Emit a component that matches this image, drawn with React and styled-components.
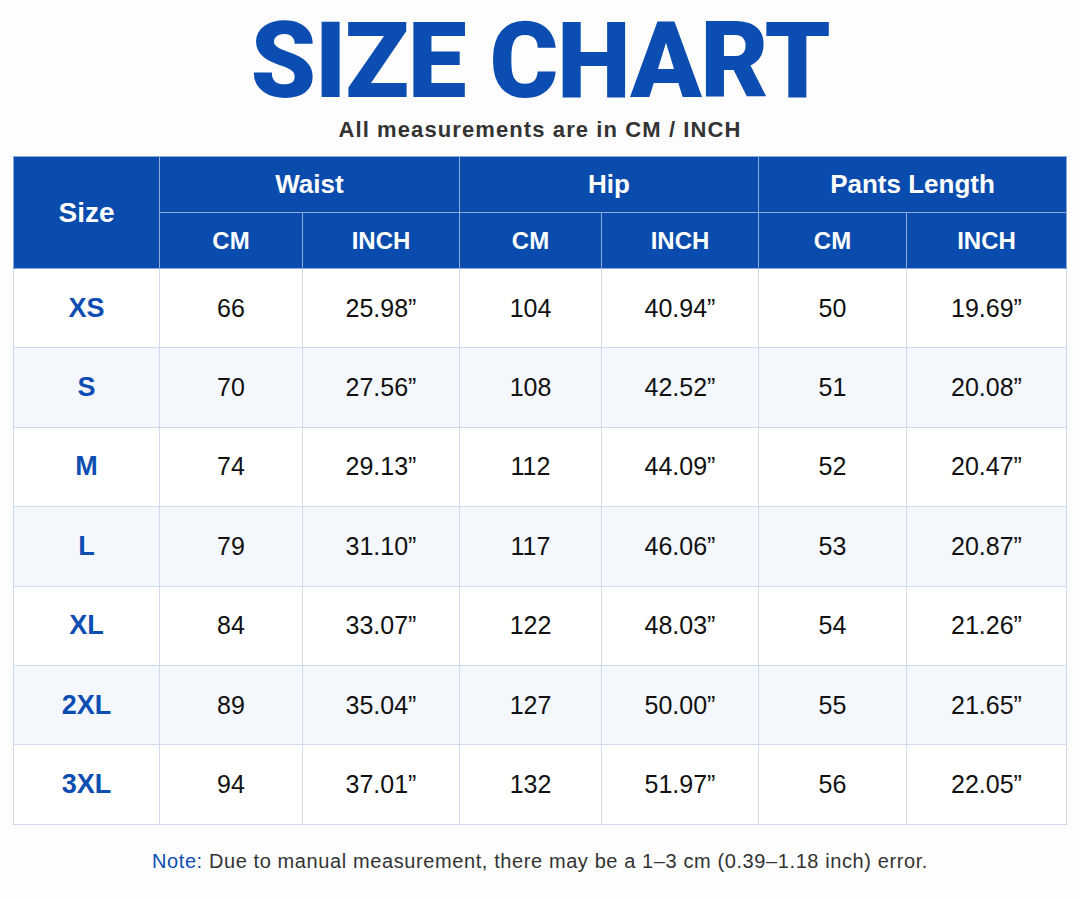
import React from "react";
import styled, { createGlobalStyle } from "styled-components";

const GlobalStyle = createGlobalStyle`
  html, body {
    margin: 0;
    padding: 0;
    background: #fdfdfd;
  }
  body {
    font-family: "Liberation Sans", Arial, sans-serif;
  }
`;

const BLUE = "#0b4db1";
const LINE = "#cfdcf0";

const Page = styled.div`
  width: 1080px;
  height: 899px;
  display: flex;
  flex-direction: column;
  align-items: center;
  overflow: hidden;
`;

const Title = styled.h1`
  margin: 14px 0 0;
  font-family: "Roboto", "Liberation Sans", sans-serif;
  font-weight: 900;
  font-size: 105px;
  line-height: 96px;
  letter-spacing: -1.5px;
  color: ${BLUE};
`;

const Subtitle = styled.div`
  margin-top: 6px;
  font-weight: 700;
  font-size: 22px;
  line-height: 28px;
  letter-spacing: 1.1px;
  color: #333;
`;

const Table = styled.table`
  margin-top: 12px;
  width: 1053px;
  border-collapse: collapse;
  table-layout: fixed;
  border: 1px solid ${LINE};
`;

const HeadCell = styled.th`
  background: #0a4cad;
  color: #fff;
  font-weight: 700;
  font-size: ${(p) => (p.$small ? "24px" : p.$tall ? "28px" : "26px")};
  height: ${(p) => (p.$tall ? "110px" : "55px")};
  padding: 0;
  text-align: center;
  border: 1px solid #8eaadb;
`;

const Row = styled.tr`
  background: ${(p) => (p.$alt ? "#f4f7fc" : "#ffffff")};
`;

const Cell = styled.td`
  height: 78.4px;
  padding: 0;
  text-align: center;
  font-size: 25px;
  color: #111;
  border: 1px solid ${LINE};
`;

const SizeCell = styled(Cell)`
  color: ${BLUE};
  font-weight: 700;
  font-size: 27px;
`;

const Note = styled.div`
  margin-top: 25px;
  font-size: 20px;
  letter-spacing: 0.6px;
  color: #333;
`;

const NoteLabel = styled.span`
  color: ${BLUE};
`;

const widths = [146, 143, 157, 142, 157, 148, 160];

const rows = [
  ["XS", "66", "25.98”", "104", "40.94”", "50", "19.69”"],
  ["S", "70", "27.56”", "108", "42.52”", "51", "20.08”"],
  ["M", "74", "29.13”", "112", "44.09”", "52", "20.47”"],
  ["L", "79", "31.10”", "117", "46.06”", "53", "20.87”"],
  ["XL", "84", "33.07”", "122", "48.03”", "54", "21.26”"],
  ["2XL", "89", "35.04”", "127", "50.00”", "55", "21.65”"],
  ["3XL", "94", "37.01”", "132", "51.97”", "56", "22.05”"],
];

export default function App() {
  return (
    <Page>
      <GlobalStyle />
      <Title>SIZE CHART</Title>
      <Subtitle>All measurements are in CM / INCH</Subtitle>
      <Table>
        <colgroup>
          {widths.map((w, i) => (
            <col key={i} style={{ width: w }} />
          ))}
        </colgroup>
        <thead>
          <tr>
            <HeadCell rowSpan={2} $tall>Size</HeadCell>
            <HeadCell colSpan={2}>Waist</HeadCell>
            <HeadCell colSpan={2}>Hip</HeadCell>
            <HeadCell colSpan={2}>Pants Length</HeadCell>
          </tr>
          <tr>
            <HeadCell $small>CM</HeadCell>
            <HeadCell $small>INCH</HeadCell>
            <HeadCell $small>CM</HeadCell>
            <HeadCell $small>INCH</HeadCell>
            <HeadCell $small>CM</HeadCell>
            <HeadCell $small>INCH</HeadCell>
          </tr>
        </thead>
        <tbody>
          {rows.map((r, i) => (
            <Row key={r[0]} $alt={i % 2 === 1}>
              <SizeCell>{r[0]}</SizeCell>
              {r.slice(1).map((v, j) => (
                <Cell key={j}>{v}</Cell>
              ))}
            </Row>
          ))}
        </tbody>
      </Table>
      <Note>
        <NoteLabel>Note:</NoteLabel> Due to manual measurement, there may be a 1–3 cm (0.39–1.18 inch) error.
      </Note>
    </Page>
  );
}
